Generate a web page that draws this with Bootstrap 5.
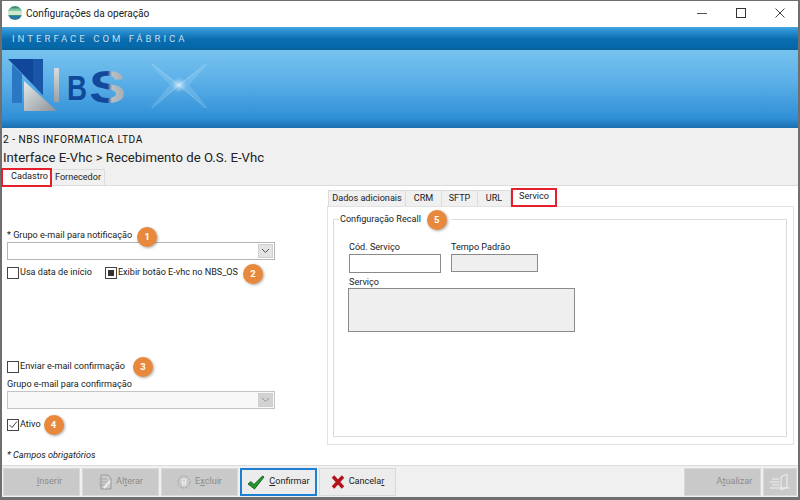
<!DOCTYPE html>
<html lang="pt-BR">
<head>
  <meta charset="UTF-8" />
  <title>Configurações da operação</title>
  <link href="https://cdn.jsdelivr.net/npm/bootstrap@5.3.0/dist/css/bootstrap.min.css" rel="stylesheet">
  <style>
    html, body { height: 100%; }
    body {
      background: #fff;
      color: #1a1a1a;
      font-family: Roboto, "Noto Sans", sans-serif;
      font-size: 9.1px;
      line-height: 13px;
      overflow: hidden;
    }
    u { text-underline-offset: 1px; }
    .app-window {
      width: 800px; height: 500px;
      border: solid #6f6f6f;
      border-width: 1px 2px 3px 2px;
      display: flex; flex-direction: column;
    }
    .title-bar { height: 26px; flex: none; padding: 0 0 2px 6px; font-size: 10.1px; color: #222; gap: 4px; margin-right: -1px; }
    .win-btn { width: 39px; height: 24px; display: flex; align-items: center; justify-content: center; }
    .strip-top {
      height: 23px; flex: none; padding-left: 10px;
      background: linear-gradient(#4aa6e0 0, #2e95d6 3px, #0a6db0 12px, #0468a9 20px, #0c5f96 23px);
      color: #c3dcea; letter-spacing: 3px; font-size: 9.6px;
    }
    .strip-logo {
      height: 78px; flex: none;
      background: linear-gradient(#76c2ee 0, #5cb0e8 40%, #2f8fd6 88%, #1b6fb0 100%);
    }
    .head-block { height: 40px; flex: none; background: #f0f0f0; padding: 5px 0 0 1px; }
    .company { font-size: 10.2px; line-height: 13px; color: #111; letter-spacing: .5px; }
    .crumb { font-size: 13.2px; line-height: 17px; margin-top: 3px; color: #222; }
    .tabs-row { background: #f0f0f0; height: 18px; flex: none; border-bottom: 1px solid #dcdcdc; }
    .tab-item {
      height: 16px; padding: 1px 0 0; background: #f0f0f0; text-align: center;
      border: 1px solid #dcdcdc; border-bottom: 0; color: #222;
      margin-right: -1px; white-space: nowrap;
    }
    .tab-item.tab-on {
      background: #fff; border: 2px solid #e5202c; height: 19px; padding-top: 0;
      margin: -2px -1px -1px 0; z-index: 1; position: relative;
    }
    .tab-item.wd-cad { width: 51px; margin: 0 -1px -2px -1px; padding-left: 6px; }
    .wd-for { width: 54px; }
    .wd-dad { width: 78px; }
    .wd-crm { width: 37px; }
    .wd-sft { width: 37px; }
    .wd-url { width: 34px; }
    .tab-item.wd-ser { width: 46px; margin-left: 1px; }
    .body-area { flex: 1 1 auto; min-height: 0; background: #fff; }
    .col-left { width: 326px; flex: none; padding: 43px 0 0 5px; }
    .col-right { flex: 1 1 auto; padding-top: 4px; min-width: 0; }
    .combo-box {
      width: 268px; height: 18px; border: 1px solid #b5b5b5; background: #fff;
      display: flex; justify-content: flex-end; padding: 1px;
    }
    .combo-box.combo-off { background: #f8f8f8; border-color: #c4c4c4; }
    .combo-arrow {
      width: 15px; background: #e3e3e3; border: 1px solid #cfcfcf;
      display: flex; align-items: center; justify-content: center;
    }
    .combo-off .combo-arrow { background: #d2d2d2; }
    .tick-box { width: 12px; height: 12px; border: 1px solid #444; background: #fff; flex: none; display: flex; align-items: center; justify-content: center; margin-right: 1px; }
    .tick-fill { width: 6px; height: 6px; background: #333; }
    .tick-two { margin-left: 13px; }
    .num-dot {
      width: 20px; height: 20px; border-radius: 50%; background: #e8883c; color: #fff;
      font-weight: 700; font-size: 9.5px; display: flex; align-items: center; justify-content: center;
      box-shadow: 1px 1px 3px rgba(0,0,0,.35); flex: none; margin: -4px 0;
    }
    .dot-low { margin: -3px 0 -5px 5px; }
    .dot-near { margin-left: 3px; }
    .rw-6 { margin-top: 6px; }
    .rw-enviar { margin-top: 81px; }
    .rw-grupo { margin-top: 5px; }
    .rw-ativo { margin-top: 9px; }
    .rw-nota { margin-top: 18px; }
    .tab-panel { border: 1px solid #e2e2e2; margin: 0 4px 0 -1px; padding: 12px 6px 0 5px; height: 239px; }
    .group-frame { border: 1px solid #dcdcdc; height: 218px; padding: 0 15px; position: relative; }
    .group-title { position: absolute; left: 5px; top: -7px; background: #fff; padding: 0 4px 0 1px; gap: 6px; }
    .fld-top { padding-top: 21px; gap: 10px; }
    .fld-input { height: 18px; border: 1px solid #8a8a8a; background: #fff; }
    .fld-off { background: #efefef; }
    .fld-code { width: 92px; height: 19px; }
    .fld-time { width: 87px; }
    .fld-serv { width: 227px; height: 44px; margin: -1px 0 0 -1px; }
    .rw-serv { margin-top: 3px; }
    .bottom-bar { height: 32px; flex: none; background: #f0f0f0; border-top: 1px solid #dcdcdc; padding: 2px 1px 1px 1px; gap: 2px; }
    .act-btn {
      width: 77px; height: 28px; background: #ececec; border: 1px solid #d9d9d9; color: #222;
      font-size: 9.1px; gap: 4px; padding: 0;
    }
    .act-off, .act-off:disabled { background: #c9c9c9; color: #8c8c8c; border-color: #d9d9d9; opacity: 1; }
    .act-focus { border: 2px solid #1d7fd1; }
    .pad-ins { padding-left: 16px; }
    .pad-atu { padding-left: 24px; }
    .act-exit { width: 34px; }
  </style>
</head>
<body>
<div class="app-window">
  <div class="title-bar d-flex align-items-center">
    <svg width="14" height="14" viewBox="0 0 14 14"><circle cx="7" cy="7" r="7" fill="#3b8f7a"/><path d="M2 2.500h10L14 5H0z" fill="#7fc7a0"/><rect x="0" y="5" width="14" height="4" fill="#cfe8cf"/><path d="M1 10h12l-2 3H3z" fill="#2b78a8"/></svg>
    <span class="flex-grow-1">Configurações da operação</span>
    <div class="d-flex">
      <div class="win-btn"><svg width="10" height="10"><path d="M0 5.500H10" stroke="#555"/></svg></div>
      <div class="win-btn"><svg width="10" height="10"><rect x=".5" y=".5" width="9" height="9" fill="none" stroke="#333"/></svg></div>
      <div class="win-btn"><svg width="10" height="10"><path d="M.5.5l9 9M9.500.5l-9 9" stroke="#444"/></svg></div>
    </div>
  </div>
  <div class="strip-top d-flex align-items-center">INTERFACE COM FÁBRICA</div>
  <div class="strip-logo">
    <svg width="240" height="78" viewBox="0 0 240 78">
      <defs>
        <linearGradient id="steel" x1="0" y1="0" x2="1" y2="1"><stop offset="0" stop-color="#e8eaea"/><stop offset="1" stop-color="#8a9298"/></linearGradient>
        <linearGradient id="steelb" x1="0" y1="0" x2="0" y2="1"><stop offset="0" stop-color="#d8dcde"/><stop offset="1" stop-color="#9aa2a8"/></linearGradient>
        <linearGradient id="halfs" x1="0" y1="0" x2="1" y2="0"><stop offset="0" stop-color="#12499b"/><stop offset=".5" stop-color="#12499b"/><stop offset=".62" stop-color="#b8c0c6"/><stop offset="1" stop-color="#a4acb2"/></linearGradient>
        <radialGradient id="glow"><stop offset="0" stop-color="#fff" stop-opacity=".7"/><stop offset="1" stop-color="#bfe6fb" stop-opacity="0"/></radialGradient>
      </defs>
      <polygon points="10,14 20,24 20,53 10,53" fill="#2a78c4"/>
      <polygon points="6,9 41,9 41,45" fill="#10479a"/>
      <polygon points="31,9 41,9 41,45 31,34" fill="#1a56a8"/>
      <polygon points="22,31 55,61 22,61" fill="url(#steel)"/>
      <rect x="52" y="18" width="5" height="34" fill="url(#steelb)"/>
      <text x="65" y="50" font-family="'Liberation Sans',sans-serif" font-weight="700" font-size="35" fill="#0f4a9a" textLength="20" lengthAdjust="spacingAndGlyphs">B</text>
      <text x="87" y="53" font-family="'Liberation Sans',sans-serif" font-weight="700" font-size="47" fill="url(#halfs)" textLength="37" lengthAdjust="spacingAndGlyphs">S</text>
      <g fill="#c4e8fb">
        <polygon points="147,13 177,35 147,59 168,35" opacity=".2"/>
        <polygon points="207,13 177,35 207,59 187,35" opacity=".2"/>
      </g>
      <path d="M150 14L177 35L204 58M204 14L177 35L150 58" stroke="#d6f0fd" stroke-width="1" opacity=".4" fill="none"/>
      <circle cx="177" cy="35" r="8" fill="url(#glow)"/>
    </svg>
  </div>
  <div class="head-block">
    <div class="company">2 - NBS INFORMATICA LTDA</div>
    <div class="crumb">Interface E-Vhc &gt; Recebimento de O.S. E-Vhc</div>
  </div>
  <div class="tabs-row d-flex align-items-end">
    <div class="tab-item tab-on wd-cad">Cadastro</div>
    <div class="tab-item wd-for">Fornecedor</div>
  </div>
  <div class="body-area d-flex">
    <div class="col-left">
      <div class="d-flex align-items-center">
        <span>* Grupo e-mail para notificação</span><span class="num-dot dot-low">1</span>
      </div>
      <div class="combo-box"><span class="combo-arrow"><svg width="9" height="6"><path d="M1 1l3.500 3.500L8 1" fill="none" stroke="#555"/></svg></span></div>
      <div class="d-flex align-items-center rw-6">
        <span class="tick-box"></span><span>Usa data de início</span>
        <span class="tick-box tick-two"><span class="tick-fill"></span></span><span>Exibir botão E-vhc no NBS_OS</span>
        <span class="num-dot dot-low">2</span>
      </div>
      <div class="d-flex align-items-center rw-enviar">
        <span class="tick-box"></span><span>Enviar e-mail confirmação</span>
        <span class="num-dot ms-2">3</span>
      </div>
      <div class="rw-grupo">Grupo e-mail para confirmação</div>
      <div class="combo-box combo-off"><span class="combo-arrow"><svg width="9" height="6"><path d="M1 1l3.500 3.500L8 1" fill="none" stroke="#999"/></svg></span></div>
      <div class="d-flex align-items-center rw-ativo">
        <span class="tick-box"><svg width="10" height="10"><path d="M1.500 5l2.500 2.500L9 1.500" fill="none" stroke="#444"/></svg></span><span>Ativo</span>
        <span class="num-dot dot-near">4</span>
      </div>
      <div class="fst-italic rw-nota">* Campos obrigatórios</div>
    </div>
    <div class="col-right">
      <div class="d-flex align-items-end">
        <div class="tab-item wd-dad">Dados adicionais</div>
        <div class="tab-item wd-crm">CRM</div>
        <div class="tab-item wd-sft">SFTP</div>
        <div class="tab-item wd-url">URL</div>
        <div class="tab-item tab-on wd-ser">Servico</div>
      </div>
      <div class="tab-panel">
        <div class="group-frame">
          <div class="group-title d-flex align-items-center"><span>Configuração Recall</span><span class="num-dot">5</span></div>
          <div class="d-flex fld-top">
            <div><div>Cód. Serviço</div><div class="fld-input fld-code"></div></div>
            <div><div>Tempo Padrão</div><div class="fld-input fld-off fld-time"></div></div>
          </div>
          <div class="rw-serv">Serviço</div>
          <div class="fld-input fld-off fld-serv"></div>
        </div>
      </div>
    </div>
  </div>
  <div class="bottom-bar d-flex">
    <button class="btn rounded-0 act-btn act-off pad-ins d-flex align-items-center justify-content-center"><span><u>I</u>nserir</span></button>
    <button class="btn rounded-0 act-btn act-off d-flex align-items-center justify-content-center">
      <svg width="14" height="16"><path d="M3 1h7l3 3v11H3z" fill="none" stroke="#9a9a9a"/><path d="M1 5h8M1 8h9M1 11h7" stroke="#aaa"/><path d="M6 14l6-7" stroke="#eee" stroke-width="2"/></svg><span>Al<u>t</u>erar</span></button>
    <button class="btn rounded-0 act-btn act-off d-flex align-items-center justify-content-center">
      <svg width="14" height="16"><circle cx="7" cy="8" r="6" fill="none" stroke="#a4a4a4" stroke-dasharray="2 1"/><path d="M5 5h4l-.5 6h-3zM5.500 7v3M7 7v3M8.500 7v3" fill="none" stroke="#eee"/></svg><span>E<u>x</u>cluir</span></button>
    <button class="btn rounded-0 act-btn act-focus d-flex align-items-center justify-content-center">
      <svg width="18" height="15"><path d="M1 9l3-2.500 3 3L15.500 1l1.500 1L7.500 14z" fill="#1f9a2a" stroke="#0a4a12" stroke-width=".8"/></svg><span><u>C</u>onfirmar</span></button>
    <button class="btn rounded-0 act-btn d-flex align-items-center justify-content-center">
      <svg width="14" height="14"><path d="M2 1.500l10 11M12 1.500l-10 11" stroke="#b3141c" stroke-width="3.400"/></svg><span>Cancela<u>r</u></span></button>
    <div class="flex-grow-1"></div>
    <button class="btn rounded-0 act-btn act-off pad-atu d-flex align-items-center justify-content-center"><span>A<u>t</u>ualizar</span></button>
    <button class="btn rounded-0 act-btn act-off act-exit d-flex align-items-center justify-content-center">
      <svg width="22" height="20"><path d="M3 7h7M1 10h9M3 13h7M12 5l6-3v13l-6 3zM1 16h20" fill="none" stroke="#f0f0f0"/></svg></button>
  </div>
</div>
</body>
</html>
